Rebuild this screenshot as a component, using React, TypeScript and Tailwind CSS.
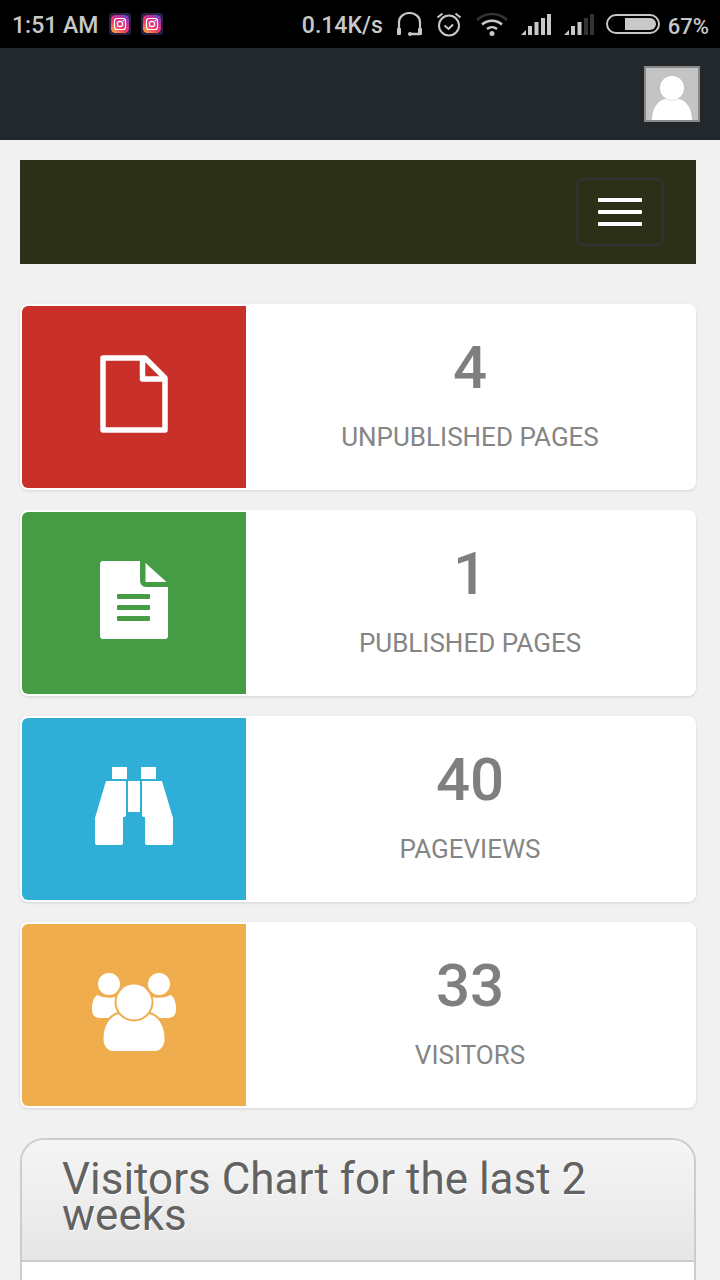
import type { ReactNode } from "react"

// ── Status bar glyphs ─────────────────────────────────────────────────────
function InstaIcon() {
  return (
    <div className="w-[22px] h-[22px] rounded-[3px] bg-[#2a2140] flex items-center justify-center">
      <svg width="18" height="18" viewBox="0 0 18 18">
        <defs>
          <linearGradient id="ig" x1="0.1" y1="1" x2="0.8" y2="0">
            <stop offset="0" stopColor="#fbb03b" />
            <stop offset="0.4" stopColor="#ee3f6e" />
            <stop offset="0.75" stopColor="#c0329a" />
            <stop offset="1" stopColor="#6a45c4" />
          </linearGradient>
        </defs>
        <rect width="18" height="18" rx="4.5" fill="url(#ig)" />
        <rect x="3.5" y="3.5" width="11" height="11" rx="2.5" fill="none" stroke="#fff" strokeWidth="1.2" />
        <circle cx="9" cy="9" r="2.6" fill="none" stroke="#fff" strokeWidth="1.2" />
        <circle cx="12.4" cy="5.6" r="0.8" fill="#fff" />
      </svg>
    </div>
  )
}

function SignalIcon({ dim }: { dim?: boolean }) {
  const xs = [7, 13.5, 20, 26]
  const hs = [9, 13, 17, 21]
  return (
    <svg width="30" height="21" viewBox="0 0 30 21">
      <path d="M0 21l5-5v5z" fill="#c8c8c8" />
      {xs.map((x, i) => (
        <rect
          key={x}
          x={x}
          y={21 - hs[i]}
          width="4"
          height={hs[i]}
          fill={dim && i > 1 ? "#333" : "#c8c8c8"}
        />
      ))}
    </svg>
  )
}

function StatusBar() {
  return (
    <div className="h-12 bg-black flex items-center pl-3 pr-[11px] text-[#c8c8c8] text-[23px] font-medium whitespace-nowrap">
      <span className="w-[86px] pt-1">1:51 AM</span>
      <div className="ml-[11px] flex gap-2.5">
        <InstaIcon />
        <InstaIcon />
      </div>
      <span className="ml-auto pt-1">0.14K/s</span>
      {/* headset */}
      <svg className="ml-[13px]" width="28" height="24" viewBox="0 0 28 24" fill="none">
        <path d="M3 20V10a10.500 9 0 0 1 21 0v10" stroke="#c8c8c8" strokeWidth="2.200" />
        <rect x="1" y="16" width="4" height="7" rx="1" fill="#c8c8c8" />
        <rect x="22" y="16" width="4" height="7" rx="1" fill="#c8c8c8" />
        <path d="M14 22h10" stroke="#c8c8c8" strokeWidth="2.500" />
        <circle cx="14" cy="22" r="2" fill="#c8c8c8" />
      </svg>
      {/* alarm */}
      <svg className="ml-[12px]" width="26" height="26" viewBox="0 0 26 26" fill="none" stroke="#c8c8c8">
        <circle cx="13" cy="14.500" r="10" strokeWidth="2" />
        <path d="M8.500 14.500l4 3.500 4.500-4.500" strokeWidth="2" />
        <path d="M1.500 6.500l5-4M24.500 6.500l-5-4" strokeWidth="2" />
      </svg>
      {/* wifi */}
      <svg className="ml-[14px]" width="32" height="24" viewBox="0 0 32 24" fill="none">
        <path d="M1 8a22 22 0 0 1 30 0" stroke="#333" strokeWidth="2.500" />
        <path d="M6 12.500a15 15 0 0 1 20 0" stroke="#c8c8c8" strokeWidth="2.500" />
        <path d="M11 17a8 8 0 0 1 10 0" stroke="#c8c8c8" strokeWidth="2.500" />
        <circle cx="16" cy="21.500" r="2.500" fill="#c8c8c8" />
      </svg>
      <div className="ml-[13px]">
        <SignalIcon />
      </div>
      <div className="ml-[13px]">
        <SignalIcon dim />
      </div>
      {/* battery */}
      <div className="ml-[12px] w-[54px] h-5 rounded-[10px] border-2 border-[#c8c8c8] flex justify-end items-center p-[2px]">
        <div className="w-[31px] h-3 bg-[#c8c8c8] rounded-r-[6px]" />
      </div>
      <span className="ml-2 text-[22px] pt-1">67%</span>
    </div>
  )
}

// ── Stat card icons ───────────────────────────────────────────────────────
function PageOutlineIcon() {
  return (
    <svg width="68" height="78" viewBox="0 0 68 78" fill="none" stroke="#fff" strokeWidth="5.500" strokeLinejoin="round">
      <path d="M3 3h42l20 20v52H3z" />
      <path d="M42.500 3v21h22" />
    </svg>
  )
}

function PageFilledIcon() {
  return (
    <svg width="68" height="78" viewBox="0 0 68 78">
      <path
        d="M3 0h37v20a6 6 0 0 0 6 6h22v49a3 3 0 0 1-3 3H3a3 3 0 0 1-3-3V3a3 3 0 0 1 3-3z"
        fill="#fff"
      />
      <path d="M45.500 2v19h21z" fill="#fff" />
      <rect x="17" y="33" width="33" height="5" rx="1" fill="#459c45" />
      <rect x="17" y="44" width="33" height="5" rx="1" fill="#459c45" />
      <rect x="17" y="55" width="33" height="5" rx="1" fill="#459c45" />
    </svg>
  )
}

function BinocularsIcon() {
  return (
    <svg width="78" height="79" viewBox="0 0 78 79" fill="#fff">
      <rect x="17" y="0" width="15" height="12" />
      <rect x="46" y="0" width="15" height="12" />
      <rect x="33" y="14" width="12" height="31" />
      <path d="M11 14h20v34l-1 2h-2v26a2 2 0 0 1-2 2H2a2 2 0 0 1-2-2V51z" />
      <path d="M67 14H47v34l1 2h2v26a2 2 0 0 0 2 2h24a2 2 0 0 0 2-2V51z" />
    </svg>
  )
}

function UsersIcon() {
  return (
    <svg width="84" height="79" viewBox="0 0 84 79" fill="#fff">
      <circle cx="17" cy="11" r="11" />
      <circle cx="67" cy="11" r="11" />
      <path d="M0 36c0-7 2-13 6-14 4 3 14 4 20 1v22H8c-5 0-8-3-8-9z" />
      <path d="M84 36c0-7-2-13-6-14-4 3-14 4-20 1v22h18c5 0 8-3 8-9z" />
      <path
        d="M10.500 66c0-14 7-24 16-26h31c9 2 16 12 16 26 0 8-5 13-11 13H21.500c-6 0-11-5-11-13z"
        stroke="#f0ad4e"
        strokeWidth="2"
      />
      <circle cx="42" cy="29" r="19.500" fill="#f0ad4e" />
      <circle cx="42" cy="29" r="17.500" />
    </svg>
  )
}

// ── Stat card ─────────────────────────────────────────────────────────────
interface StatCardProps {
  color: string
  value: string
  label: string
  icon: ReactNode
}

function StatCard({ color, value, label, icon }: StatCardProps) {
  return (
    <div className="h-[186px] mb-5 flex bg-white rounded-lg p-0.5 shadow-[0_1px_3px_rgba(0,0,0,0.12)]">
      <div className={`w-[224px] shrink-0 rounded-l-md flex items-center justify-center pb-[6px] ${color}`}>
        {icon}
      </div>
      <div className="flex-1 flex flex-col items-center text-[#7f7f7f]">
        <div className="mt-[30px] h-[64px] leading-[64px] text-[60px] font-medium">{value}</div>
        <div className="mt-[22px] text-[26px] leading-[30px] text-[#858585]">{label}</div>
      </div>
    </div>
  )
}

export default function App() {
  return (
    <div className="h-[1280px] overflow-hidden bg-[#f1f1f1] font-['Roboto',sans-serif]">
      <StatusBar />

      {/* Top header */}
      <div className="h-[92px] bg-[#23282c] flex justify-end items-start pt-[18px] pr-5">
        <div className="w-14 h-14 border-2 border-[#888] bg-[#c4c4c4] flex items-end justify-center overflow-hidden">
          <svg width="40" height="44" viewBox="0 0 40 44" fill="#fff">
            <circle cx="20" cy="12" r="12" />
            <path d="M0 44c0-12 6-20 14-21 4 2 8 2 12 0 8 1 14 9 14 21z" />
          </svg>
        </div>
      </div>

      <div className="pl-5 pr-6 pt-5">
        {/* Nav bar */}
        <div className="h-[104px] bg-[#2d3018] flex items-center justify-end pr-8 mb-10">
          <div className="w-[88px] h-[68px] rounded-lg border-2 border-[#333] flex flex-col items-center justify-center gap-2">
            <div className="w-11 h-1 rounded-[1px] bg-white" />
            <div className="w-11 h-1 rounded-[1px] bg-white" />
            <div className="w-11 h-1 rounded-[1px] bg-white" />
          </div>
        </div>

        <StatCard color="bg-[#c9302a]" value="4" label="UNPUBLISHED PAGES" icon={<PageOutlineIcon />} />
        <StatCard color="bg-[#459c45]" value="1" label="PUBLISHED PAGES" icon={<PageFilledIcon />} />
        <StatCard color="bg-[#2fafd8]" value="40" label="PAGEVIEWS" icon={<BinocularsIcon />} />
        <StatCard color="bg-[#f0ad4e]" value="33" label="VISITORS" icon={<UsersIcon />} />

        {/* Chart panel */}
        <div className="mt-[30px] border-2 border-[#ccc] rounded-t-[24px] bg-white h-[200px] overflow-hidden">
          <div className="h-[122px] border-b-2 border-[#ccc] bg-gradient-to-b from-[#f5f5f5] to-[#e6e6e6] pl-10 pr-10 pt-[21px]">
            <h2 className="text-[44px] leading-[36px] font-normal text-[#626262] [text-shadow:1px_1px_0_#fff]">
              Visitors Chart for the last 2 weeks
            </h2>
          </div>
        </div>
      </div>
    </div>
  )
}
